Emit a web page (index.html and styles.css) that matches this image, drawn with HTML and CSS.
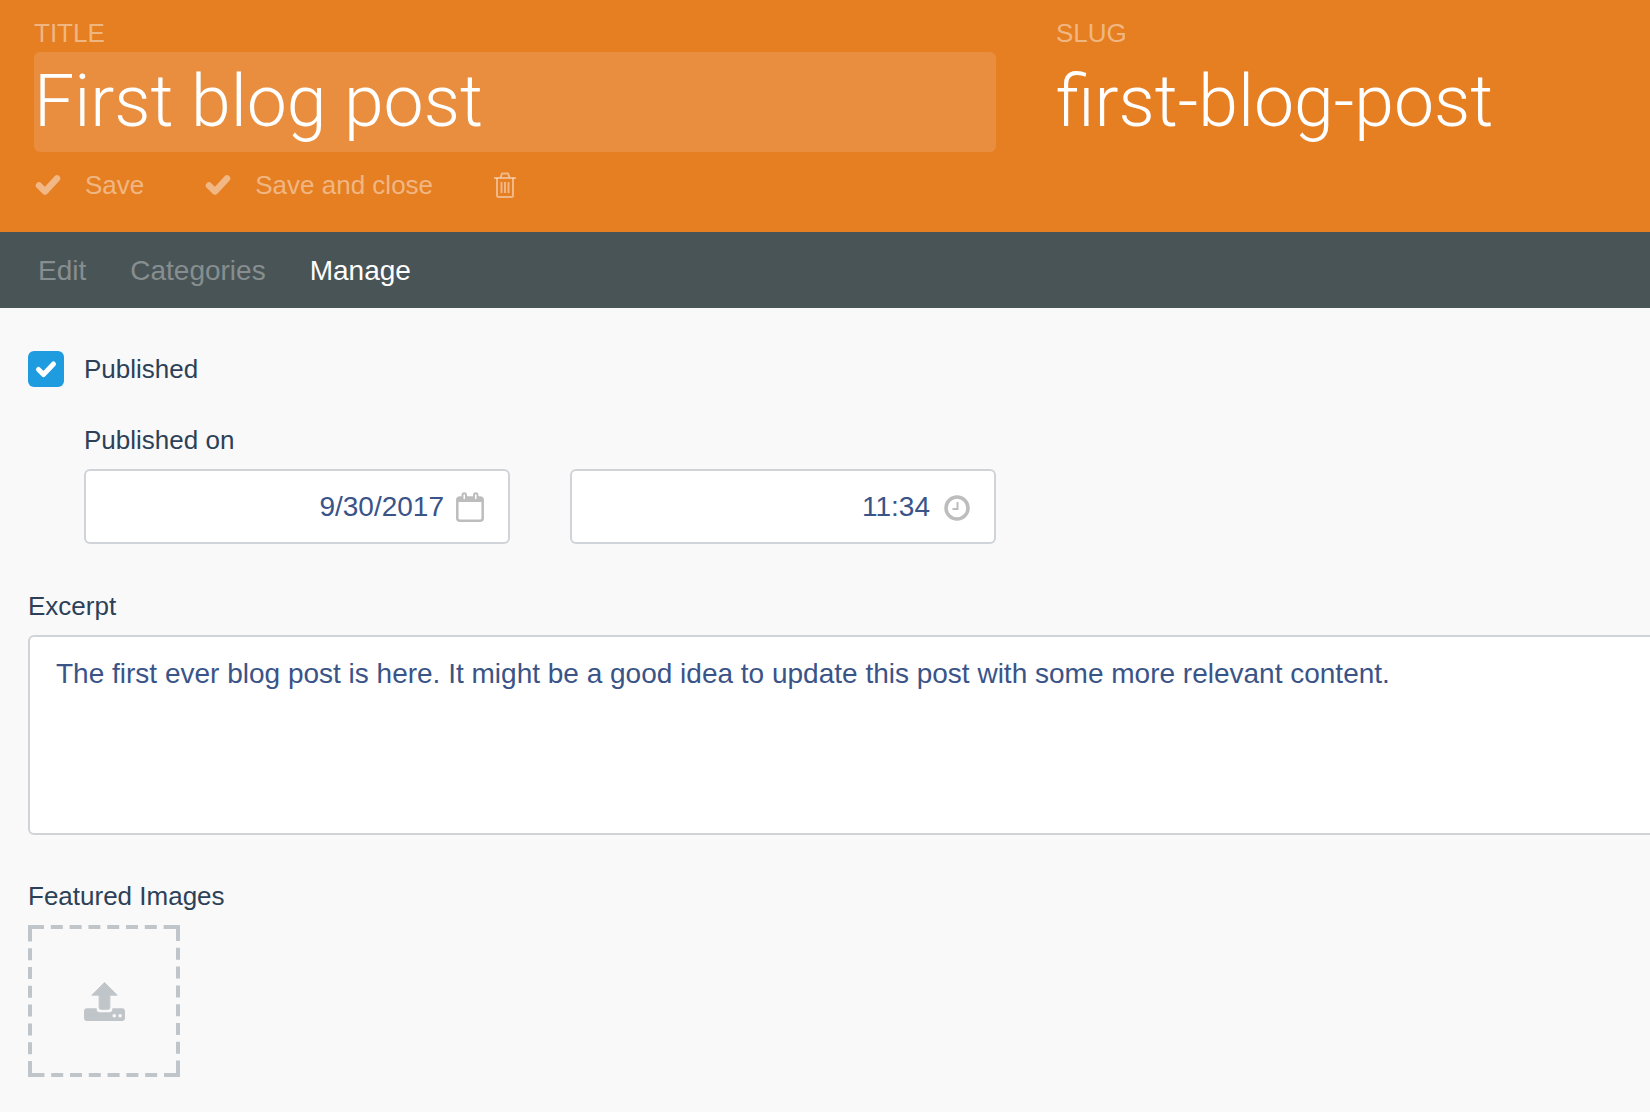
FILE: index.html
```html
<!DOCTYPE html>
<html lang="en">
<head>
<meta charset="utf-8">
<title>First blog post</title>
<link rel="stylesheet" href="styles.css">
</head>
<body>
<header class="hero">
  <div class="hero-fields">
    <div class="field">
      <div class="hero-label">TITLE</div>
      <div class="hero-value hero-value-active">First blog post</div>
    </div>
    <div class="field">
      <div class="hero-label">SLUG</div>
      <div class="hero-value">first-blog-post</div>
    </div>
  </div>
  <div class="actions">
    <span class="action">
      <svg class="icon-check" viewBox="0 0 26 22"><path d="M4 11.500L10 17.500L22 4.500" fill="none" stroke="currentColor" stroke-width="6.500" stroke-linejoin="round" stroke-linecap="round"/></svg>
      Save
    </span>
    <span class="action">
      <svg class="icon-check" viewBox="0 0 26 22"><path d="M4 11.500L10 17.500L22 4.500" fill="none" stroke="currentColor" stroke-width="6.500" stroke-linejoin="round" stroke-linecap="round"/></svg>
      Save and close
    </span>
    <svg class="icon-trash" viewBox="0 0 22 26" fill="none" stroke="currentColor" stroke-width="2"><path d="M0 6H22" /><path d="M6.500 5.500L8 1.500H14L15.500 5.500"/><path d="M3 6V23.500Q3 25 4.500 25H17.500Q19 25 19 23.500V6"/><path d="M7.500 10V21M11 10V21M14.500 10V21"/></svg>
  </div>
</header>
<nav class="tabs">
  <a class="tab">Edit</a>
  <a class="tab">Categories</a>
  <a class="tab tab-active">Manage</a>
</nav>
<main class="content">
  <div class="publish-row">
    <span class="checkbox">
      <svg viewBox="0 0 36 36"><path d="M10.500 18.500L15.500 23.500L25.500 13" fill="none" stroke="#fff" stroke-width="5" stroke-linecap="round" stroke-linejoin="round"/></svg>
    </span>
    <span class="label">Published</span>
  </div>
  <div class="publish-on">
    <div class="label">Published on</div>
    <div class="date-row">
      <div class="input">
        <span>9/30/2017</span>
        <svg class="icon-cal" viewBox="0 0 28 30" fill="none" stroke="#bdbdbd" stroke-width="2.500"><path d="M4 5.500H24Q26.700 5.500 26.700 8V26.500Q26.700 28.700 24 28.700H4Q1.300 28.700 1.300 26.500V8Q1.300 5.500 4 5.500Z"/><path d="M1.300 8H26.700" stroke-width="4"/><rect x="6.500" y="1.300" width="3.500" height="7" rx="1.750" fill="#fff" stroke-width="2"/><rect x="18" y="1.300" width="3.500" height="7" rx="1.750" fill="#fff" stroke-width="2"/></svg>
      </div>
      <div class="input">
        <span>11:34</span>
        <svg class="icon-clock" viewBox="0 0 26 26" fill="none" stroke="#bdbdbd"><circle cx="13" cy="13" r="11" stroke-width="3.500"/><path d="M13.500 7V14H8.500" stroke-width="2"/></svg>
      </div>
    </div>
  </div>
  <div class="label label-excerpt">Excerpt</div>
  <div class="textarea">The first ever blog post is here. It might be a good idea to update this post with some more relevant content.</div>
  <div class="label label-images">Featured Images</div>
  <div class="upload">
    <svg class="upload-border" viewBox="0 0 152 152" fill="none" stroke="#c0c5ca" stroke-width="4" stroke-dasharray="16 6.800 12 6.800 12 6.800 12 6.800 12 6.800 12 6.800 12 6.800 16"><path d="M0 2H152"/><path d="M150 0V152"/><path d="M152 150H0"/><path d="M2 152V0"/></svg>
    <svg class="icon-upload" viewBox="0 0 42 40"><path d="M21 0.500L34 13.500H26.500V26Q26.500 28 24.500 28H17.500Q15.500 28 15.500 26V13.500H8Z" fill="#c0c5ca" stroke="#c0c5ca" stroke-linejoin="round"/><path d="M3 27H13V28Q13 31 16 31H26Q29 31 29 28V27H39Q42 27 42 30V37Q42 40 39 40H3Q0 40 0 37V30Q0 27 3 27Z" fill="#c0c5ca"/><circle cx="31" cy="34.500" r="1.800" fill="#f9f9f9"/><circle cx="37" cy="34.500" r="1.800" fill="#f9f9f9"/></svg>
  </div>
</main>
</body>
</html>
```
FILE: styles.css
```css
* { box-sizing: border-box; }
html, body { margin: 0; height: 100%; }
body {
  overflow: hidden;
  background: #f9f9f9;
  font-family: "Liberation Sans", Arial, sans-serif;
  color: #2c4158;
}
.hero {
  height: 232px;
  padding: 18px 0 0 34px;
  background: #e67e22;
  color: #fff;
}
.hero-fields {
  display: grid;
  grid-template-columns: 962px 1fr;
  column-gap: 60px;
}
.hero-label {
  height: 34px;
  font-size: 26px;
  line-height: 30px;
  color: rgba(255, 255, 255, .45);
}
.hero-value {
  height: 100px;
  border-radius: 6px;
  font-family: Roboto, "Liberation Sans", sans-serif;
  font-weight: 300;
  font-size: 71.5px;
  line-height: 100px;
  white-space: nowrap;
}
.hero-value-active { background: rgba(255, 255, 255, .13); }
.actions {
  display: flex;
  align-items: center;
  margin-top: 18px;
  padding-left: 1px;
  color: rgba(255, 255, 255, .45);
  font-size: 26px;
  line-height: 30px;
}
.action {
  display: flex;
  align-items: center;
  gap: 24px;
  margin-right: 61px;
}
.icon-check { display: block; width: 26px; height: 22px; }
.icon-trash { display: block; width: 22px; height: 26px; }
.tabs {
  display: flex;
  align-items: center;
  gap: 44px;
  height: 76px;
  padding: 2px 0 0 38px;
  background: #495456;
  font-size: 28px;
  color: rgba(255, 255, 255, .35);
}
.tab-active { color: #fff; }
.content { padding: 43px 0 0 28px; }
.label { font-size: 26px; line-height: 30px; }
.publish-row {
  display: flex;
  align-items: center;
  gap: 20px;
  height: 36px;
}
.checkbox {
  display: block;
  width: 36px;
  height: 36px;
  border-radius: 6px;
  background: #1f9be0;
}
.checkbox svg { display: block; }
.publish-on { margin: 38px 0 0 56px; }
.date-row {
  display: grid;
  grid-template-columns: 426px 426px;
  column-gap: 60px;
  margin-top: 14px;
}
.input {
  display: flex;
  align-items: center;
  justify-content: flex-end;
  height: 75px;
  padding-top: 1px;
  border: 2px solid #d0d4d8;
  border-radius: 6px;
  background: #fff;
  font-size: 28px;
  color: #3a5488;
}
.icon-cal { display: block; width: 28px; height: 30px; margin: 0 24px 0 12px; }
.icon-clock { display: block; width: 26px; height: 26px; margin: 2px 24px 0 14px; }
.label-excerpt { margin-top: 47px; }
.textarea {
  width: 1800px;
  height: 200px;
  margin-top: 14px;
  padding: 20px 26px;
  border: 2px solid #d0d4d8;
  border-radius: 6px;
  background: #fff;
  font-size: 28px;
  line-height: 34px;
  color: #3a5488;
}
.label-images { margin-top: 46px; }
.upload {
  position: relative;
  display: flex;
  align-items: center;
  justify-content: center;
  width: 152px;
  height: 152px;
  margin-top: 14px;
}
.upload-border { position: absolute; inset: 0; width: 152px; height: 152px; }
.icon-upload { display: block; width: 41px; height: 39px; margin-top: 0; }
```
